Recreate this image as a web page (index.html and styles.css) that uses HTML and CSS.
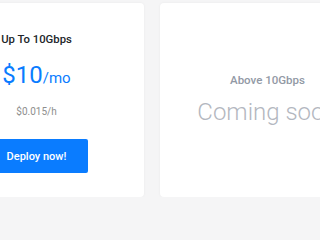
FILE: index.html
```html
<!DOCTYPE html>
<html>
<head>
<meta charset="utf-8">
<link rel="stylesheet" href="styles.css">
</head>
<body>
<div class="plans">
  <div class="card">
    <div class="title">Up To 10Gbps</div>
    <div class="price"><span class="amount">$10</span><span class="per">/mo</span></div>
    <div class="hourly">$0.015/h</div>
    <button class="deploy">Deploy now!</button>
  </div>
  <div class="card soon">
    <div class="soon-title">Above 10Gbps</div>
    <div class="soon-text">Coming soon</div>
  </div>
</div>
</body>
</html>
```
FILE: styles.css
```css
html, body {
  margin: 0;
  padding: 0;
  overflow: hidden;
}
body {
  background: #f5f5f6;
  font-family: Roboto, "Liberation Sans", sans-serif;
}
.plans {
  display: flex;
  gap: 16px;
  padding-top: 3px;
  margin-left: -71px;
}
.card {
  flex: 0 0 215px;
  height: 194px;
  box-sizing: border-box;
  background: #ffffff;
  border-radius: 4px;
  box-shadow: 0 0 3px rgba(0, 0, 0, 0.05);
  display: flex;
  flex-direction: column;
  align-items: center;
  padding-top: 29.5px;
}
.title {
  font-size: 11.3px;
  line-height: 13px;
  font-weight: 500;
  color: #212529;
}
.price {
  margin-top: 15px;
  font-size: 24px;
  line-height: 28px;
  height: 28px;
  color: #0a7cff;
  white-space: nowrap;
}
.amount {
  font-size: 24px;
}
.per {
  font-size: 15px;
}
.hourly {
  margin-top: 17px;
  font-size: 10px;
  line-height: 12px;
  color: #8e8e8e;
}
.deploy {
  margin-top: 21.5px;
  width: 103px;
  height: 34px;
  border: 0;
  border-radius: 2px;
  background: #0a7cff;
  color: #ffffff;
  font-family: Roboto, "Liberation Sans", sans-serif;
  font-size: 11px;
  font-weight: 500;
  padding: 0;
}
.soon {
  padding-top: 70.5px;
}
.soon-title {
  font-size: 11.5px;
  line-height: 13px;
  font-weight: 500;
  color: #9299a5;
}
.soon-text {
  margin-top: 11px;
  font-size: 24px;
  line-height: 28px;
  font-weight: 300;
  color: #b3b7c0;
  white-space: nowrap;
}
```
